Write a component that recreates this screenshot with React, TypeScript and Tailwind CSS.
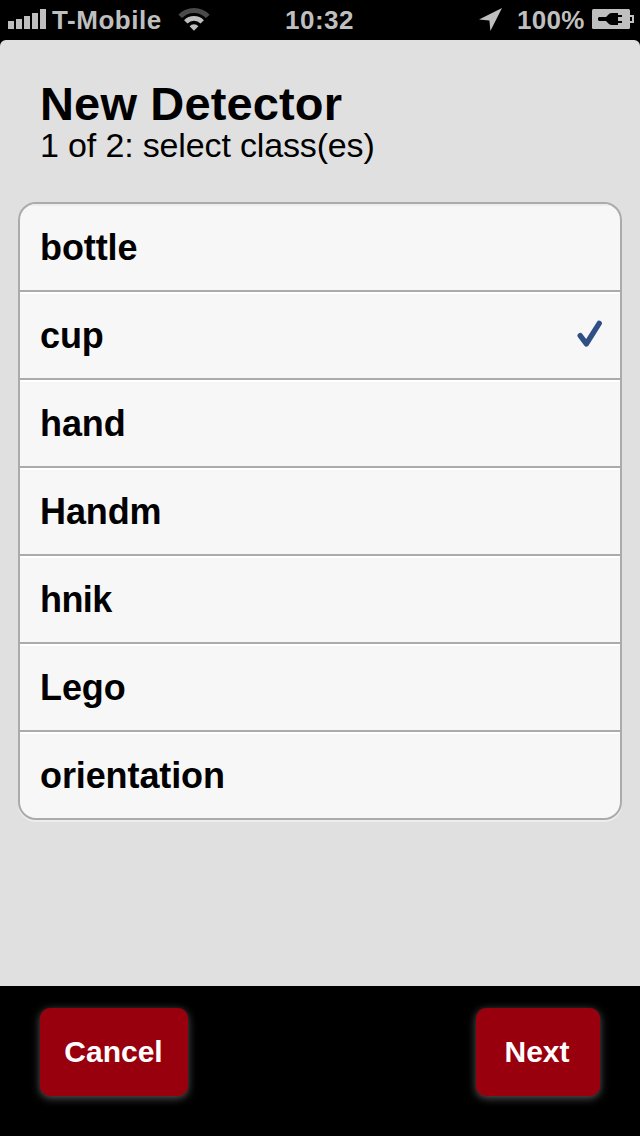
import React from "react";

const classes = ["bottle", "cup", "hand", "Handm", "hnik", "Lego", "orientation"];

function Signal() {
  return (
    <svg width="38" height="20" viewBox="0 0 38 20" fill="#bfbfbf" shapeRendering="crispEdges">
      <rect x="0" y="12" width="6" height="8" />
      <rect x="8" y="10" width="6" height="10" />
      <rect x="16" y="7" width="6" height="13" />
      <rect x="24" y="4" width="6" height="16" />
      <rect x="32" y="0" width="6" height="20" />
    </svg>
  );
}

function Wifi() {
  return (
    <svg width="32" height="24" viewBox="0 0 32 24" fill="none">
      <path d="M2.2 9.4 A19 19 0 0 1 29.8 9.4" stroke="#4a4a4a" strokeWidth="5" />
      <path d="M7.8 14.8 A11.4 11.4 0 0 1 24.2 14.8" stroke="#bfbfbf" strokeWidth="4.8" />
      <path d="M11.6 19.2 A6 6 0 0 1 20.4 19.2 L16 23.8 Z" fill="#bfbfbf" />
    </svg>
  );
}

function LocationArrow() {
  return (
    <svg width="24" height="24" viewBox="0 0 24 24" fill="#bfbfbf">
      <path d="M23 0 L11.4 23 L10.4 12.6 L0 11.4 Z" />
    </svg>
  );
}

function Battery() {
  return (
    <svg width="42" height="20" viewBox="0 0 42 20">
      <rect x="0" y="0" width="38" height="20" rx="1.5" fill="#bfbfbf" />
      <path d="M38 7 H41 V13 H38" fill="none" stroke="#bfbfbf" strokeWidth="2" />
      <path
        d="M7 8 H14 L17 5 Q18 4 20 4 H26 V6 H30 V8 H26 V12 H30 V14 H26 V16 H20 Q18 16 17 15 L14 12 H7 L6 11 V9 Z"
        fill="#000"
      />
    </svg>
  );
}

function Check() {
  return (
    <svg className="mb-[4px]" width="26" height="28" viewBox="0 0 26 28" fill="none">
      <path d="M3.2 15.6 L9.4 23.8 L22.2 3.4" stroke="#2f4f85" strokeWidth="5.4" strokeLinecap="round" strokeLinejoin="round" />
    </svg>
  );
}

function StatusBar() {
  return (
    <header className="flex h-10 items-start text-[26px] leading-[40px] font-bold text-[#bfbfbf]">
      <div className="ml-2 mt-[9px]"><Signal /></div>
      <span className="ml-[6px] w-[112px] tracking-[0.55px] whitespace-nowrap">T-Mobile</span>
      <div className="ml-[14px] mt-[7px]"><Wifi /></div>
      <span className="ml-[75px] w-[80px] tracking-[0.5px] whitespace-nowrap">10:32</span>
      <div className="ml-[114px] mt-[8px]"><LocationArrow /></div>
      <span className="ml-[14px] w-[75px] tracking-[0.3px] whitespace-nowrap">100%</span>
      <div className="mt-[9px]"><Battery /></div>
    </header>
  );
}

export default function App() {
  return (
    <div className="flex h-[1136px] w-[640px] flex-col overflow-hidden bg-black font-['Liberation_Sans',Arial,sans-serif]">
      <StatusBar />
      <main className="flex-1 rounded-t-[6px] bg-[#e0e0e0] px-[18px] pt-[36px] text-black">
        <h1 className="ml-[22px] text-[47px] leading-[56px] font-bold tracking-[0.15px]">New Detector</h1>
        <p className="ml-[22px] h-[70px] text-[34px] leading-[26px] tracking-[-0.15px]">1 of 2: select class(es)</p>
        <ul className="h-[618px] overflow-hidden rounded-[18px] border-2 border-[#ababab] bg-[#f7f7f7] shadow-[0_2px_0_#ededed]">
          {classes.map((name, i) => (
            <li
              key={name}
              className={`flex h-[88px] items-center justify-between border-b-2 border-[#ababab] pt-[2px] pr-[17px] pl-5 text-[36px] leading-[40px] font-bold ${
                i > 0 ? "shadow-[inset_0_2px_0_#fff]" : "shadow-[inset_0_2px_0_#ededed]"
              } ${name === "hnik" ? "tracking-[-0.6px]" : "tracking-[-0.1px]"}`}
            >
              <span>{name}</span>
              {name === "cup" && <Check />}
            </li>
          ))}
        </ul>
      </main>
      <footer className="flex h-[150px] justify-between px-10 pt-[22px] text-[30px] font-bold text-white">
        <button className="h-[88px] w-[148px] rounded-[10px] bg-[#99000d] pr-[1px] pb-[2px] shadow-[0_2px_8px_rgba(255,255,255,0.35)]">Cancel</button>
        <button className="h-[88px] w-[124px] rounded-[10px] bg-[#99000d] pr-[2px] pb-[2px] shadow-[0_2px_8px_rgba(255,255,255,0.35)]">Next</button>
      </footer>
    </div>
  );
}
